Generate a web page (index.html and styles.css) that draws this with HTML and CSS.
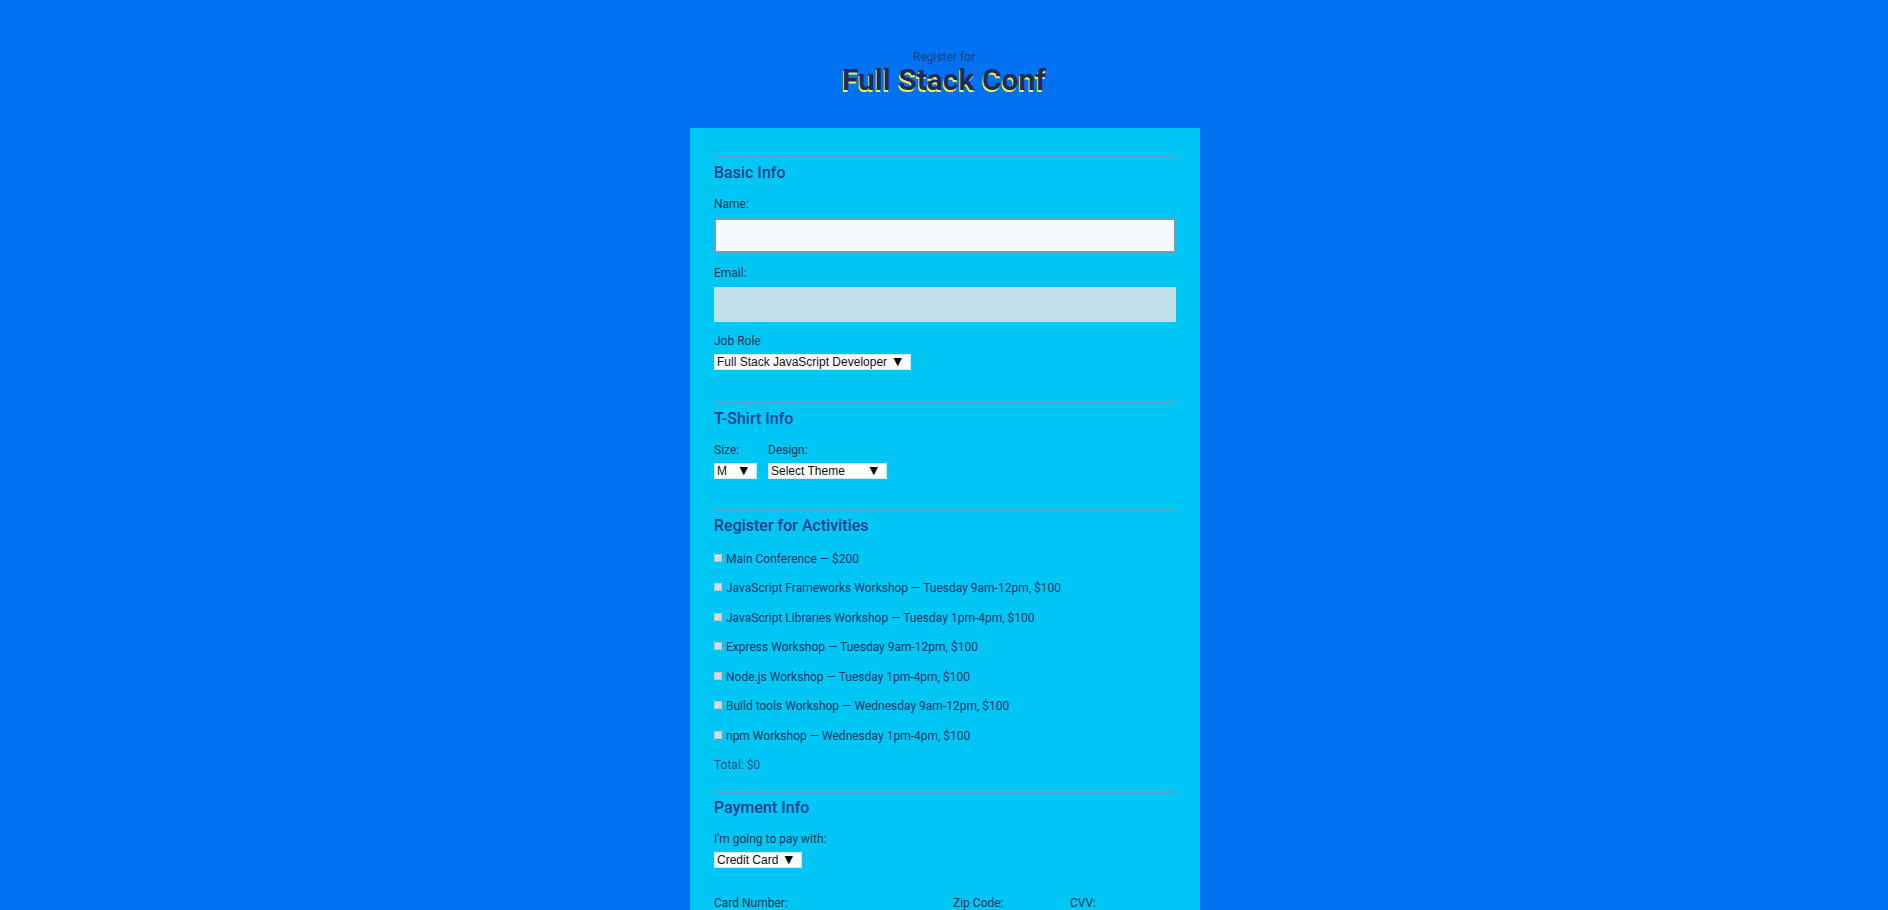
FILE: index.html
```html
<!DOCTYPE html>
<html lang="en">
<head>
<meta charset="utf-8">
<title>Full Stack Conf</title>
<link rel="stylesheet" href="styles.css">
</head>
<body>
<header class="header">
  <span class="header-sub">Register for</span>
  <h1 class="header-title">Full Stack Conf</h1>
</header>
<form class="form">
  <section class="section section-basic">
    <h2 class="section-title">Basic Info</h2>
    <label class="label label-first" for="name">Name:</label>
    <input class="input input-name" id="name" type="text" autofocus>
    <label class="label" for="email">Email:</label>
    <input class="input input-email" id="email" type="email">
    <label class="label label-job" for="title">Job Role</label>
    <span class="select select-job"><select class="select-el" id="title"><option>Full Stack JavaScript Developer</option></select><span class="select-arrow">▼</span></span>
  </section>

  <section class="section section-shirt">
    <h2 class="section-title">T-Shirt Info</h2>
    <div class="shirt-row">
      <div class="shirt-col">
        <label class="label label-first" for="size">Size:</label>
        <span class="select select-size"><select class="select-el" id="size"><option>M</option></select><span class="select-arrow">▼</span></span>
      </div>
      <div class="shirt-col">
        <label class="label label-first" for="design">Design:</label>
        <span class="select select-design"><select class="select-el" id="design"><option>Select Theme</option></select><span class="select-arrow">▼</span></span>
      </div>
    </div>
  </section>

  <section class="section section-activities">
    <h2 class="section-title">Register for Activities</h2>
    <div class="activities">
      <label class="activity"><input class="check" type="checkbox">Main Conference — $200</label>
      <label class="activity"><input class="check" type="checkbox">JavaScript Frameworks Workshop — Tuesday 9am-12pm, $100</label>
      <label class="activity"><input class="check" type="checkbox">JavaScript Libraries Workshop — Tuesday 1pm-4pm, $100</label>
      <label class="activity"><input class="check" type="checkbox">Express Workshop — Tuesday 9am-12pm, $100</label>
      <label class="activity"><input class="check" type="checkbox">Node.js Workshop — Tuesday 1pm-4pm, $100</label>
      <label class="activity"><input class="check" type="checkbox">Build tools Workshop — Wednesday 9am-12pm, $100</label>
      <label class="activity"><input class="check" type="checkbox">npm Workshop — Wednesday 1pm-4pm, $100</label>
      <p class="total">Total: $0</p>
    </div>
  </section>

  <section class="section section-payment">
    <h2 class="section-title">Payment Info</h2>
    <label class="label label-first" for="payment">I'm going to pay with:</label>
    <span class="select select-payment"><select class="select-el" id="payment"><option>Credit Card</option></select><span class="select-arrow">▼</span></span>
    <div class="card-row">
      <div class="card-col"><label class="label label-first" for="cc-num">Card Number:</label><input class="input input-email" id="cc-num" type="text"></div>
      <div class="card-col"><label class="label label-first" for="zip">Zip Code:</label><input class="input input-email" id="zip" type="text"></div>
      <div class="card-col"><label class="label label-first" for="cvv">CVV:</label><input class="input input-email" id="cvv" type="text"></div>
    </div>
  </section>
</form>
</body>
</html>
```

FILE: styles.css
```css
html, body {
  margin: 0;
  padding: 0;
}

body {
  background: #0071f1;
  font-family: Roboto, "Liberation Sans", Arial, sans-serif;
  color: #0b3a5e;
}

.header {
  display: flex;
  flex-direction: column;
  align-items: center;
  padding-top: 50px;
}

.header-sub {
  font-size: 12px;
  line-height: 15px;
  color: #1c3f86;
}

.header-title {
  margin: 0;
  font-size: 30px;
  line-height: 30px;
  font-weight: 700;
  color: #1e2b5e;
  text-shadow: -1px 2px 0 #eef24a;
}

.form {
  width: 510px;
  box-sizing: border-box;
  margin: 33px 0 0 calc(50% - 254px);
  padding: 28px 24px 40px;
  background: #00c6f6;
  display: flex;
  flex-direction: column;
}

.section {
  border-top: 2px solid #5aa2c9;
  display: flex;
  flex-direction: column;
  align-items: flex-start;
}

.section-basic { padding-bottom: 32px; }
.section-shirt { padding-bottom: 30px; }
.section-activities { padding-bottom: 18px; }

.section-title {
  margin: 5px 0 0;
  font-size: 16px;
  line-height: 20px;
  font-weight: 500;
  color: #1a418c;
}

.label {
  display: block;
  font-size: 12px;
  line-height: 15px;
  margin-top: 13px;
  margin-bottom: 5px;
  color: #0b3a55;
}

.label-first {
  margin-top: 14px;
}

.label-job {
  margin-top: 12px;
}

.input {
  width: 100%;
  height: 35px;
  box-sizing: border-box;
  margin: 0;
  font: 13px Roboto, sans-serif;
  padding: 0 8px;
  outline: none;
}

.input-name {
  margin-top: 1px;
  background: #f6faff;
  border: 2px solid #5fa4c7;
  caret-color: #000;
}

.input-email {
  margin-top: 1px;
  background: #c0dfe9;
  border: none;
}

.select {
  display: inline-flex;
  align-items: center;
  height: 16px;
  box-sizing: border-box;
  background: #fff;
  border: 1px solid #d7e9ef;
  font-family: "Liberation Sans", Arial, sans-serif;
  font-size: 12px;
  color: #111;
  padding: 0 8px 0 2px;
}

.select-el {
  appearance: none;
  -webkit-appearance: none;
  border: none;
  background: transparent;
  font: inherit;
  color: inherit;
  padding: 0;
  margin: 0;
  flex: 1;
  min-width: 0;
  height: 14px;
  line-height: 14px;
  outline: none;
}

.select-arrow {
  font-family: "DejaVu Sans", sans-serif;
  font-size: 11px;
  line-height: 14px;
  color: #000;
}

.select-job { width: 197px; }
.select-size { width: 43px; }
.select-design { width: 119px; }
.select-payment { width: 88px; }

.shirt-row {
  display: flex;
  gap: 11px;
}

.shirt-col {
  display: flex;
  flex-direction: column;
  align-items: flex-start;
}

.activities {
  margin-top: 15.5px;
  display: flex;
  flex-direction: column;
  gap: 14.5px;
}

.activity {
  display: flex;
  align-items: center;
  font-size: 12px;
  line-height: 15px;
  color: #0b3a66;
}

.check {
  appearance: none;
  -webkit-appearance: none;
  width: 8px;
  height: 8px;
  margin: 0 4px 3px 0;
  box-sizing: border-box;
  background: #d9dadb;
  border: 1px solid #c2c5c8;
}

.total {
  margin: 0;
  font-size: 12px;
  line-height: 15px;
  color: #23548f;
}

.card-row {
  margin-top: 14px;
  width: 100%;
  display: grid;
  grid-template-columns: 239px 117px 1fr;
}

.card-col {
  display: flex;
  flex-direction: column;
  padding-right: 12px;
}
```
